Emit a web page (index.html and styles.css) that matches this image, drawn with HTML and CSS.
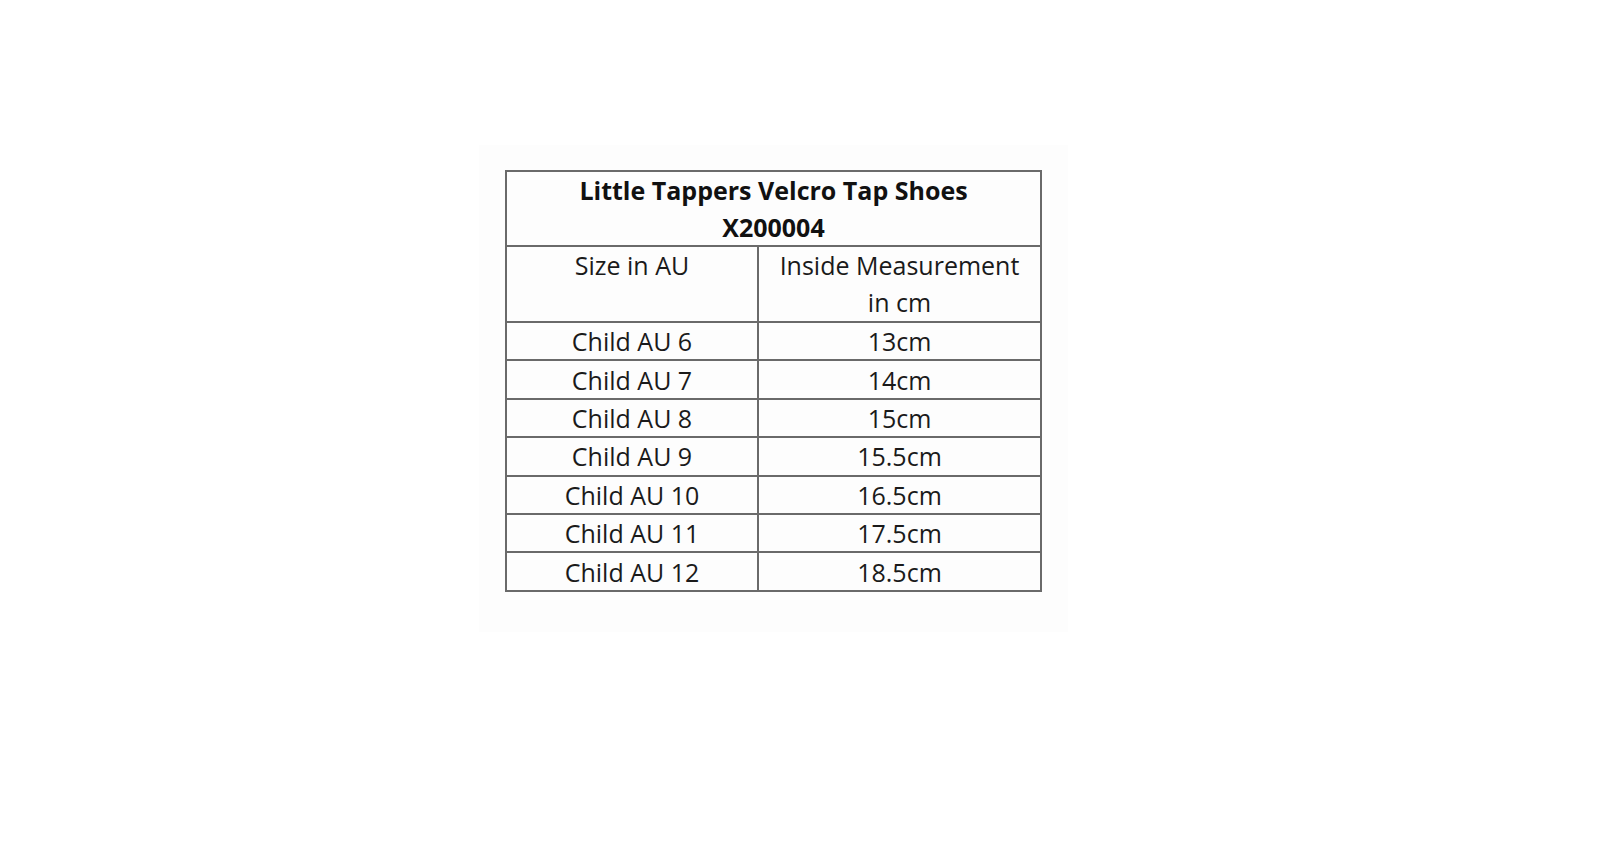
FILE: index.html
```html
<!DOCTYPE html>
<html>
<head>
<meta charset="utf-8">
<link rel="stylesheet" href="styles.css">
</head>
<body>
<div class="page">
  <div class="sheet">
    <table class="chart">
      <colgroup><col class="col-size"><col class="col-measure"></colgroup>
      <thead>
        <tr><th colspan="2" class="title">Little Tappers Velcro Tap Shoes<br>X200004</th></tr>
        <tr><td class="head">Size in AU</td><td class="head">Inside Measurement<br>in cm</td></tr>
      </thead>
      <tbody>
        <tr><td>Child AU 6</td><td>13cm</td></tr>
        <tr><td>Child AU 7</td><td>14cm</td></tr>
        <tr><td>Child AU 8</td><td>15cm</td></tr>
        <tr><td>Child AU 9</td><td>15.5cm</td></tr>
        <tr><td>Child AU 10</td><td>16.5cm</td></tr>
        <tr><td>Child AU 11</td><td>17.5cm</td></tr>
        <tr><td>Child AU 12</td><td>18.5cm</td></tr>
      </tbody>
    </table>
  </div>
</div>
</body>
</html>
```
FILE: styles.css
```css
html, body {
  margin: 0;
  padding: 0;
  background: #ffffff;
}
.page {
  width: 1600px;
  height: 860px;
  padding-top: 145px;
  padding-left: 479px;
  box-sizing: border-box;
}
.sheet {
  display: inline-block;
  background: #fdfdfd;
  padding: 25px 26px 40px 26px;
}
.chart {
  border-collapse: collapse;
  font-family: "Open Sans", "Liberation Sans", sans-serif;
  color: #1a1a1a;
  font-size: 25px;
  table-layout: fixed;
  width: 535px;
}
.col-size {
  width: 252px;
}
.col-measure {
  width: 283px;
}
.chart td, .chart th {
  border: 2px solid #6a6a6a;
  text-align: center;
  padding: 0;
  line-height: 36.5px;
  height: 36px;
}
.chart .title {
  font-weight: bold;
  color: #111;
  height: 73px;
  vertical-align: top;
  padding-top: 0;
}
.chart .head {
  vertical-align: top;
  height: 74px;
  padding-top: 0;
}
.chart tbody td {
  height: 36.4px;
  line-height: 36px;
  padding-top: 0;
}
```
